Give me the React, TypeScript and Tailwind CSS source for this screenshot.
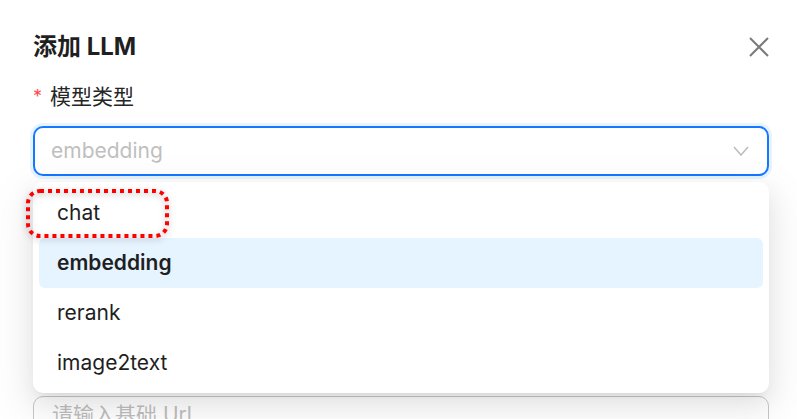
const font = { fontFamily: 'Inter, "Noto Sans CJK SC", sans-serif' };

const options = ['chat', 'embedding', 'rerank', 'image2text'];

const App = () => {
    const selected = 'embedding';

    return (
        <div className="relative w-[797px] h-[419px] overflow-hidden bg-white" style={font}>
            <div className="pl-[33px] pr-[28px] pt-[31px]">
                {/* Header */}
                <div className="flex items-center justify-between h-8">
                    <h2 className="text-[24px] leading-8 font-bold text-[#1f1f1f]">添加 LLM</h2>
                    <button className="w-5 h-5 flex items-center justify-center text-[#7a7a7a]">
                        <svg width="20" height="20" viewBox="0 0 20 20" fill="none" stroke="currentColor" strokeWidth="2">
                            <path d="M1 1L19 19M19 1L1 19" />
                        </svg>
                    </button>
                </div>

                {/* Label */}
                <div className="mt-[18px] flex items-center h-8 text-[21px] text-[#262626]">
                    <span className="text-[#ff4d4f] text-[18px] mr-[8px] leading-none">*</span>
                    模型类型
                </div>

                {/* Select */}
                <div className="relative mt-[13px] w-[736px]">
                    <div className="h-[50px] rounded-[10px] border-2 border-[#1677ff] shadow-[0_0_0_3px_rgba(5,145,255,0.1)] flex items-center pl-[16px] pr-[18px] justify-between bg-white">
                        <span className="text-[21px] text-[#bfbfbf]">{selected}</span>
                        <svg width="16" height="10" viewBox="0 0 16 10" fill="none" stroke="#bdbdbd" strokeWidth="1.6">
                            <path d="M1 1L8 9L15 1" />
                        </svg>
                    </div>

                    {/* Dropdown */}
                    <div className="absolute left-0 top-[56px] w-[736px] z-10 bg-white rounded-[10px] px-[6px] pt-[6px] pb-[5px] shadow-[0_9px_24px_0_rgba(0,0,0,0.08),0_5px_9px_-6px_rgba(0,0,0,0.12),0_14px_42px_12px_rgba(0,0,0,0.05)]">
                        {options.map((opt) => (
                            <div
                                key={opt}
                                className={
                                    opt === selected
                                        ? 'h-[50px] flex items-center pl-[18px] rounded-[6px] bg-[#e6f4ff] text-[21px] font-semibold text-[#1f1f1f]'
                                        : 'h-[50px] flex items-center pl-[18px] rounded-[6px] text-[21px] text-[#1f1f1f]'
                                }
                            >
                                {opt}
                            </div>
                        ))}
                    </div>

                    {/* Highlight marker */}
                    <svg
                        className="absolute left-[-7px] top-[63px] z-20 drop-shadow-[0_2px_3px_rgba(0,0,0,0.3)]"
                        width="143"
                        height="49"
                        viewBox="0 0 143 49"
                        fill="none"
                    >
                        <rect x="2" y="2" width="139" height="45" rx="12" stroke="#ff0000" strokeWidth="4" strokeDasharray="4 4" />
                    </svg>
                </div>

                {/* Next field, mostly covered by the dropdown */}
                <div className="mt-[220px] w-[736px] h-[48px] rounded-[10px] border-[1.5px] border-[#c8c8c8] flex items-center pl-[18px] pb-[10px]">
                    <span className="text-[21px] text-[#bfbfbf]">请输入基础 Url</span>
                </div>
            </div>
        </div>
    );
};

export default App;
